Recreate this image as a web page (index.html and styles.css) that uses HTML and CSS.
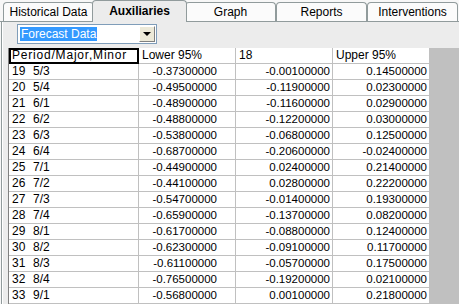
FILE: index.html
```html
<!DOCTYPE html>
<html lang="en">
<head>
  <meta charset="UTF-8">
  <title>Auxiliaries</title>
  <link rel="stylesheet" href="styles.css">
</head>
<body>
  <div class="tabs">
    <div class="tab">Historical Data</div>
    <div class="tab active">Auxiliaries</div>
    <div class="tab">Graph</div>
    <div class="tab">Reports</div>
    <div class="tab">Interventions</div>
  </div>
  <div class="panel">
    <div class="combo">
      <span class="comboText"><span class="selected">Forecast Data</span></span>
      <span class="comboBtn"><span class="arrow"></span></span>
    </div>
    <div class="gridArea">
      <table class="grid">
        <colgroup>
          <col class="c1"><col class="c2"><col class="c3"><col class="c4">
        </colgroup>
        <thead>
          <tr>
            <th class="focus">Period/Major,Minor</th>
            <th>Lower 95%</th>
            <th>18</th>
            <th>Upper 95%</th>
          </tr>
        </thead>
        <tbody id="rows"></tbody>
      </table>
    </div>
  </div>

  <script>
    // Forecast rows: index, period, lower, value, upper
    const data = [
      [19, "5/3", "-0.37300000", "-0.00100000", "0.14500000"],
      [20, "5/4", "-0.49500000", "-0.11900000", "0.02300000"],
      [21, "6/1", "-0.48900000", "-0.11600000", "0.02900000"],
      [22, "6/2", "-0.48800000", "-0.12200000", "0.03000000"],
      [23, "6/3", "-0.53800000", "-0.06800000", "0.12500000"],
      [24, "6/4", "-0.68700000", "-0.20600000", "-0.02400000"],
      [25, "7/1", "-0.44900000", "0.02400000", "0.21400000"],
      [26, "7/2", "-0.44100000", "0.02800000", "0.22200000"],
      [27, "7/3", "-0.54700000", "-0.01400000", "0.19300000"],
      [28, "7/4", "-0.65900000", "-0.13700000", "0.08200000"],
      [29, "8/1", "-0.61700000", "-0.08800000", "0.12400000"],
      [30, "8/2", "-0.62300000", "-0.09100000", "0.11700000"],
      [31, "8/3", "-0.61100000", "-0.05700000", "0.17500000"],
      [32, "8/4", "-0.76500000", "-0.19200000", "0.02100000"],
      [33, "9/1", "-0.56800000", "0.00100000", "0.21800000"]
    ];

    const rows = document.getElementById('rows');
    data.forEach(function(r) {
      const tr = document.createElement('tr');
      tr.innerHTML =
        '<td><span class="num">' + r[0] + '</span>' + r[1] + '</td>' +
        '<td class="val v2">' + r[2] + '</td>' +
        '<td class="val">' + r[3] + '</td>' +
        '<td class="val">' + r[4] + '</td>';
      rows.appendChild(tr);
    });
  </script>
</body>
</html>
```
FILE: styles.css
```css
body {
  margin: 0;
  background: #f7f7f7;
  font-family: "Liberation Sans", Arial, sans-serif;
  font-size: 11px;
  color: #000;
  height: 304px;
  overflow: hidden;
  display: flex;
  flex-direction: column;
}
.tabs {
  display: flex;
  align-items: flex-end;
  height: 22px;
  padding-left: 3px;
  border-bottom: 1px solid #919b9c;
  box-sizing: border-box;
}
.tab {
  width: 91px;
  height: 19px;
  box-sizing: border-box;
  border: 1px solid #919b9c;
  border-bottom: none;
  border-radius: 4px 4px 0 0;
  background: #fbfbfb;
  text-align: center;
  line-height: 18px;
  font-size: 12px;
}
.tab.active {
  height: 22px;
  margin: 0 -2px -1px;
  width: 95px;
  background: #ececec;
  font-weight: bold;
  position: relative;
  line-height: 20px;
}
.panel {
  flex: 1;
  min-height: 0;
  background: #ececec;
  border-left: 1px solid #919b9c;
  box-shadow: inset 1px 0 #fff;
  margin-left: 1px;
  display: flex;
  flex-direction: column;
}
.combo {
  display: flex;
  margin: 2px 0 0 15px;
  width: 140px;
  height: 20px;
  box-sizing: border-box;
  background: #fff;
  border: 1px solid #7f9db9;
  padding: 1px;
}
.comboText {
  flex: 1;
  padding: 1px 0 0 1px;
}
.selected {
  display: inline-block;
  background: #3399ff;
  color: #fff;
  padding: 0 1px;
  line-height: 14px;
  font-size: 12px;
}
.comboBtn {
  width: 16px;
  background: #ece9d8;
  border: 1px solid;
  border-color: #fff #808080 #808080 #fff;
  box-sizing: border-box;
  display: flex;
  align-items: center;
  justify-content: center;
}
.arrow {
  width: 0;
  height: 0;
  border-left: 4px solid transparent;
  border-right: 4px solid transparent;
  border-top: 4px solid #000;
}
.gridArea {
  flex: 1;
  min-height: 0;
  margin: 4px 0 0 6px;
  background: #c0c0c0;
  border-left: 1px solid #808080;
  overflow: hidden;
}
.grid {
  border-collapse: separate;
  border-spacing: 0;
  table-layout: fixed;
  width: 421px;
  background: #fff;
}
.c1 { width: 130px; }
.c2 { width: 97px; }
.c3 { width: 97px; }
.c4 { width: 97px; }
.grid th,
.grid td {
  height: 15px;
  padding: 0 2px 0 3px;
  border-right: 1px solid #c0c0c0;
  border-bottom: 1px solid #c0c0c0;
  font-weight: normal;
  text-align: left;
  white-space: nowrap;
  overflow: hidden;
  line-height: 15px;
  font-size: 12px;
}
.grid th.focus {
  outline: 2px solid #000;
  outline-offset: -2px;
  letter-spacing: 0.8px;
}
.num {
  display: inline-block;
  width: 21px;
}
.grid td.val {
  text-align: right;
  font-size: 11.5px;
}
.grid td.v2 {
  padding-right: 18px;
}
```
